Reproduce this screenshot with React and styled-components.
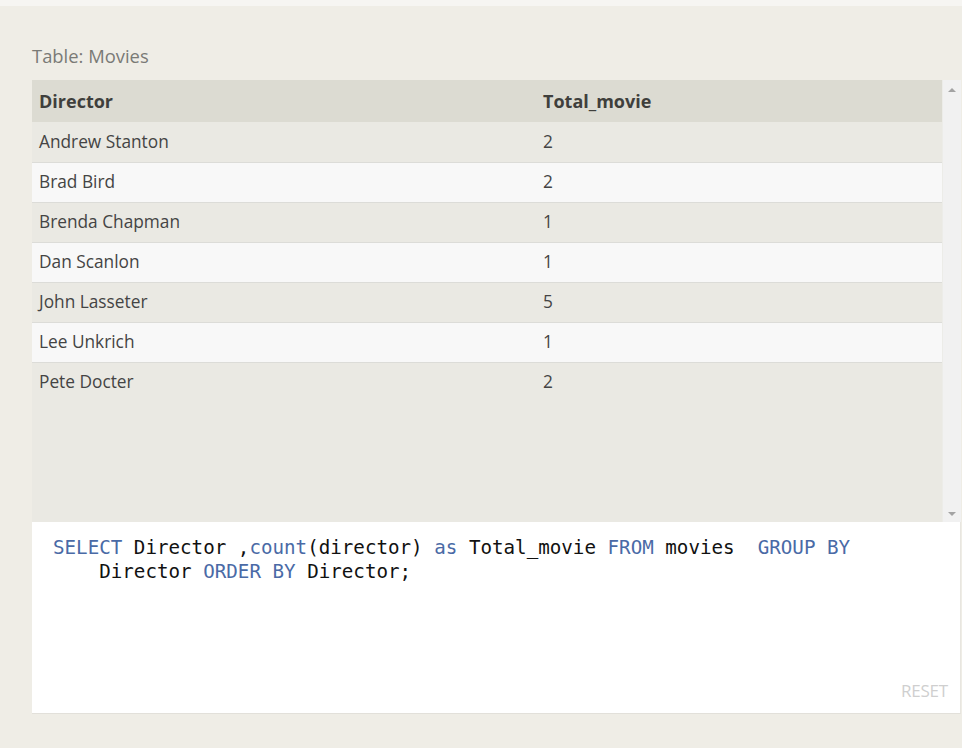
import React from "react";
import styled, { createGlobalStyle } from "styled-components";

const Global = createGlobalStyle`
  html, body { margin: 0; padding: 0; background: #f6f5f2; }
  body { font-family: "Open Sans", "Noto Sans", sans-serif; }
`;

const Page = styled.div`
  padding-top: 6px;
  height: 748px;
  box-sizing: border-box;
`;

const Panel = styled.div`
  background: #efede6;
  height: 742px;
  box-sizing: border-box;
  padding: 36px 1px 0 32px;
  display: flex;
  flex-direction: column;
`;

const Title = styled.div`
  font-size: 18.4px;
  line-height: 26px;
  color: #7a7a76;
  margin-bottom: 12px;
  padding-top: 1px;
  height: 25px;
`;

const TableFrame = styled.div`
  display: flex;
  height: 442px;
  background: #eae9e3;
`;

const TableBody = styled.div`
  flex: 1;
  display: flex;
  flex-direction: column;
`;

const Row = styled.div`
  display: grid;
  grid-template-columns: 504px 1fr;
  height: ${(p) => (p.$head ? "42px" : "40px")};
  box-sizing: border-box;
  align-items: center;
  padding-bottom: ${(p) => (p.$head ? "0" : "2px")};
  background: ${(p) => (p.$head ? "#dcdbd2" : p.$alt ? "#f8f8f8" : "#eae9e3")};
  border-top: ${(p) => (p.$head || p.$first ? "none" : "1px solid #dcdcd8")};
  font-size: ${(p) => (p.$head ? "18px" : "17.3px")};
  font-weight: ${(p) => (p.$head ? 700 : 400)};
  color: ${(p) => (p.$head ? "#3f3f3c" : "#444444")};
`;

const Cell = styled.div`
  padding-left: 7px;
`;

const Scrollbar = styled.div`
  width: 19px;
  background: #f1f1f1;
  display: flex;
  flex-direction: column;
  justify-content: space-between;
  align-items: center;
  padding: 8px 0 6px;
  box-sizing: border-box;
  border-left: 1px solid #ecece8;
`;

const Arrow = styled.div`
  width: 0;
  height: 0;
  border-left: 4px solid transparent;
  border-right: 4px solid transparent;
  ${(p) =>
    p.$down
      ? "border-top: 4px solid #a3a3a3;"
      : "border-bottom: 4px solid #a3a3a3;"}
`;

const Editor = styled.div`
  background: #ffffff;
  height: 192px;
  box-sizing: border-box;
  border-bottom: 1px solid #e2e0da;
  border-right: 1px solid #e8e6e0;
  padding: 14px 12px 11px 21px;
  display: flex;
  flex-direction: column;
`;

const Code = styled.pre`
  margin: 0;
  font-family: "DejaVu Sans Mono", "Liberation Mono", monospace;
  font-size: 19.2px;
  line-height: 24px;
  color: #111;
  white-space: pre;
`;

const Kw = styled.span`
  color: #4a6aa6;
`;

const Reset = styled.div`
  margin-top: auto;
  align-self: flex-end;
  font-size: 17px;
  color: #cfcfcf;
  padding-right: 0;
  letter-spacing: -0.2px;
`;

const rows = [
  ["Andrew Stanton", 2],
  ["Brad Bird", 2],
  ["Brenda Chapman", 1],
  ["Dan Scanlon", 1],
  ["John Lasseter", 5],
  ["Lee Unkrich", 1],
  ["Pete Docter", 2],
];

export default function App() {
  return (
    <Page>
      <Global />
      <Panel>
        <Title>Table: Movies</Title>
        <TableFrame>
          <TableBody>
            <Row $head>
              <Cell>Director</Cell>
              <Cell>Total_movie</Cell>
            </Row>
            {rows.map(([d, n], i) => (
              <Row key={d} $alt={i % 2 === 1} $first={i === 0}>
                <Cell>{d}</Cell>
                <Cell>{n}</Cell>
              </Row>
            ))}
          </TableBody>
          <Scrollbar>
            <Arrow />
            <Arrow $down />
          </Scrollbar>
        </TableFrame>
        <Editor>
          <Code>
            <Kw>SELECT</Kw> Director ,<Kw>count</Kw>(director) <Kw>as</Kw> Total_movie <Kw>FROM</Kw> movies  <Kw>GROUP BY</Kw>
            {"\n    "}Director <Kw>ORDER BY</Kw> Director;
          </Code>
          <Reset>RESET</Reset>
        </Editor>
      </Panel>
    </Page>
  );
}
